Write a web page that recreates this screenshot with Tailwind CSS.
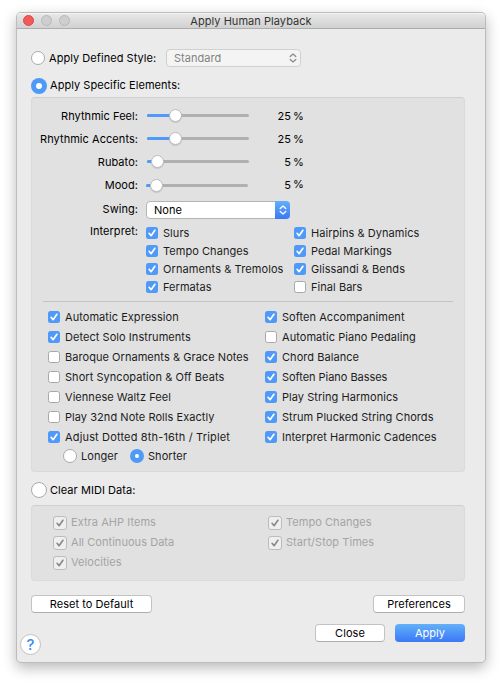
<!DOCTYPE html>
<html lang="en">
<head>
<meta charset="utf-8">
<title>Apply Human Playback</title>
<script src="https://cdn.jsdelivr.net/npm/@tailwindcss/browser@4"></script>
</head>
<body class="bg-white overflow-hidden w-[502px] h-[683px] pt-[13px] pl-[17px] font-['Inter','Liberation_Sans',sans-serif] text-[11px] leading-[14px] tracking-[0.05px] text-[#1c1c1c] whitespace-nowrap">
<svg class="hidden">
  <symbol id="tick" viewBox="0 0 12 12"><path d="M3.1 6.3 5.1 8.7 8.9 3.3" fill="none" stroke="currentColor" stroke-width="1.7" stroke-linecap="round" stroke-linejoin="round"/></symbol>
  <symbol id="updown" viewBox="0 0 8 10"><path d="M1.2 3.6 4 1.1 6.8 3.6M1.2 6.4 4 8.9 6.8 6.4" fill="none" stroke="currentColor" stroke-width="1.3" stroke-linecap="round" stroke-linejoin="round"/></symbol>
</svg>
<main class="w-[468px] h-[649px] rounded-[4px] bg-[#ebebeb] shadow-[0_0_0_1px_#bcbcbc,0_5px_14px_1px_rgba(0,0,0,0.28)] flex flex-col">
  <header class="h-4 shrink-0 rounded-t-[4px] border-b border-[#adadad] border-t border-t-[#f4f4f4] bg-linear-to-b from-[#e7e7e7] to-[#d1d1d1] flex items-center relative">
    <div class="flex gap-[7px] ml-[6px] -mt-px">
      <i class="size-[11px] rounded-full bg-[#f25a5a] border border-[#dc4a4b]"></i>
      <i class="size-[11px] rounded-full bg-[#cecece] border border-[#b9b9b9]"></i>
      <i class="size-[11px] rounded-full bg-[#cecece] border border-[#b9b9b9]"></i>
    </div>
    <h1 class="absolute inset-x-0 text-center text-[#333]">Apply Human Playback</h1>
  </header>

  <section class="px-[14px] pt-5 flex flex-col">
    <div class="h-[18px] flex items-center">
      <i class="size-[14px] rounded-full bg-white border border-[#aaa]"></i>
      <span class="ml-1 w-[117px] text-black">Apply Defined Style:</span>
      <div class="w-[135px] h-[18px] rounded-[4px] border border-[#d0d0d0] bg-[#f4f4f4] flex items-center pl-[7px] pr-[3px] text-[#828282]">
        <span class="flex-1">Standard</span>
        <svg class="w-2 h-[10px] text-[#8a8a8a]"><use href="#updown"/></svg>
      </div>
    </div>
    <div class="mt-[11px] h-4 flex items-center">
      <i class="size-4 rounded-full bg-[#4f9af8] flex items-center justify-center"><b class="size-[6px] rounded-full bg-white"></b></i>
      <span class="ml-[3px] pb-[2px] text-black">Apply Specific Elements:</span>
    </div>

    <div class="mt-[3px] w-[434px] h-[375px] rounded-[4px] border border-[#dadada] border-t-[#d0d0d0] bg-[#e1e1e1] flex flex-col">
      <div id="sliders" class="pt-[6px] text-black"></div>
      <div class="mt-[5px] h-[18px] flex items-center text-black">
        <span class="w-[106px] text-right pb-[3px]">Swing:</span>
        <div class="ml-2 w-36 h-[18px] rounded-[4px] bg-white border border-[#b5b5b5] flex items-center pl-[7px] relative">
          <span>None</span>
          <div class="absolute -right-px -top-px w-[15px] h-[18px] rounded-r-[4px] bg-linear-to-b from-[#63b0f8] to-[#3d77f6] flex items-center justify-center text-white"><svg class="w-2 h-[10px]"><use href="#updown"/></svg></div>
        </div>
      </div>
      <div class="mt-[5px] flex items-start">
        <span class="w-[106px] text-right h-4 text-black">Interpret:</span>
        <div id="interpretLeft" class="ml-2 w-[148px]"></div>
        <div id="interpretRight"></div>
      </div>
      <hr class="mt-[5px] mx-[11px] border-[#c4c4c4]">
      <div class="mt-[5px] pl-4 flex">
        <div id="optionsLeft" class="w-[217px]"></div>
        <div id="optionsRight"></div>
      </div>
      <div class="mt-[2px] pl-[31px] h-[14px] flex items-center">
        <i class="size-[14px] rounded-full bg-white border border-[#aaa]"></i>
        <span class="ml-1 w-[49px]">Longer</span>
        <i class="size-[14px] rounded-full bg-[#4f9af8] flex items-center justify-center"><b class="size-1 rounded-full bg-white"></b></i>
        <span class="ml-1">Shorter</span>
      </div>
    </div>

    <div class="mt-[10px] h-4 flex items-center">
      <i class="size-4 rounded-full bg-white border border-[#aaa]"></i>
      <span class="ml-[3px] text-black">Clear MIDI Data:</span>
    </div>
    <div class="mt-[7px] w-[434px] h-[76px] rounded-[4px] border border-[#dadada] border-t-[#d0d0d0] bg-[#e1e1e1] pl-[21px] pt-[7px] flex text-[#a4a4a4]">
      <div id="midiLeft" class="w-[215px]"></div>
      <div id="midiRight"></div>
    </div>
  </section>

  <footer class="pl-[14px] pr-5 pt-[14px] text-black">
    <div class="flex justify-between">
      <button class="w-[121px] h-[18px] rounded-[4px] bg-white border border-[#c3c3c3] border-b-[#adadad]">Reset to Default</button>
      <button class="w-[92px] h-[18px] rounded-[4px] bg-white border border-[#c3c3c3] border-b-[#adadad]">Preferences</button>
    </div>
    <div class="mt-[11px] -ml-[11px] flex">
      <button class="mt-[10px] size-[21px] rounded-full bg-white border border-[#c0c0c0] text-[#3a8bf7] text-[15px] font-medium tracking-normal">?</button>
      <button class="ml-auto w-[70px] h-[18px] rounded-[4px] bg-white border border-[#c3c3c3] border-b-[#adadad]">Close</button>
      <button class="ml-[10px] w-[70px] h-[18px] rounded-[4px] bg-linear-to-b from-[#63b0f8] to-[#3d77f6] text-white">Apply</button>
    </div>
  </footer>
</main>
<script>
const fill = (id, html) => document.getElementById(id).innerHTML = html.join('');
const box = on => on
  ? '<svg class="size-3 rounded-[2.5px] bg-[#4f9af8] text-white"><use href="#tick"/></svg>'
  : '<i class="size-3 rounded-[2.5px] bg-white border border-[#a8a8a8]"></i>';
const check = height => ([on, text, track]) => `<div class="${height} flex items-center">${box(on)}<span class="ml-[5px] ${track ?? ''}">${text}</span></div>`;
const midi = ([text]) => `<div class="h-5 flex items-center"><span class="size-[14px] rounded-[3px] bg-[#efefef] border border-[#bcbcbc] flex"><svg class="size-3 text-[#8b8b8b]"><use href="#tick"/></svg></span><span class="ml-1 -mt-[2px]">${text}</span></div>`;

fill('sliders', [['Rhythmic Feel:', 28, 25, 0], ['Rhythmic Accents:', 28, 25, 0], ['Rubato:', 10, 5, 0], ['Mood:', 10, 5, 1]].map(([name, at, value, last]) => `
  <div class="h-[23px] flex items-center">
    <span class="w-[106px] text-right">${name}</span>
    <div class="${last ? 'ml-2 mr-px mt-[2px]' : 'ml-[9px]'} w-[102px] h-[3px] rounded-full bg-[#b0b0b0] relative">
      <div class="h-[3px] rounded-full bg-[#4f9af8]" style="width:${at}px"></div>
      <i class="absolute -top-[5px] size-[13px] rounded-full bg-white border border-[#bbb] shadow-[0_1px_1px_rgba(0,0,0,0.12)]" style="left:${at - 6}px"></i>
    </div>
    <span class="w-[42px] text-right">${value}</span><span class="ml-[2px] ${last ? 'pb-[2px]' : ''}">%</span>
  </div>`));
fill('interpretLeft', [[1, 'Slurs'], [1, 'Tempo Changes'], [1, 'Ornaments &amp; Tremolos', 'tracking-[0.09px]'], [1, 'Fermatas']].map(check('h-[18px]')));
fill('interpretRight', [[1, 'Hairpins &amp; Dynamics'], [1, 'Pedal Markings'], [1, 'Glissandi &amp; Bends'], [0, 'Final Bars']].map(check('h-[18px]')));
fill('optionsLeft', [[1, 'Automatic Expression'], [1, 'Detect Solo Instruments'], [0, 'Baroque Ornaments &amp; Grace Notes'], [0, 'Short Syncopation &amp; Off Beats'], [0, 'Viennese Waltz Feel'], [0, 'Play 32nd Note Rolls Exactly'], [1, 'Adjust Dotted 8th-16th / Triplet', 'tracking-[0.16px]']].map(check('h-5')));
fill('optionsRight', [[1, 'Soften Accompaniment'], [0, 'Automatic Piano Pedaling'], [1, 'Chord Balance'], [1, 'Soften Piano Basses', 'tracking-[-0.04px]'], [1, 'Play String Harmonics'], [1, 'Strum Plucked String Chords'], [1, 'Interpret Harmonic Cadences']].map(check('h-5')));
fill('midiLeft', [['Extra AHP Items'], ['All Continuous Data'], ['Velocities']].map(midi));
fill('midiRight', [['Tempo Changes'], ['Start/Stop Times']].map(midi));
</script>
</body>
</html>
